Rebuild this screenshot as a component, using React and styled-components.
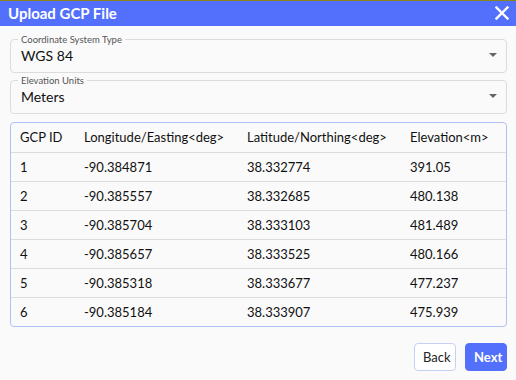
import React from "react";
import styled, { createGlobalStyle } from "styled-components";

const Global = createGlobalStyle`
  html, body { margin: 0; padding: 0; background: #fafafa; }
  body { font-family: Lato, "Open Sans", sans-serif; }
  * { box-sizing: border-box; }
`;

const Dialog = styled.div`
  width: 516px;
  height: 380px;
  background: #fafafa;
  border-top: 1px solid #8a861c;
  display: flex;
  flex-direction: column;
  position: relative;
  overflow: hidden;
`;

const Header = styled.div`
  height: 25px;
  background: #5370fd;
  display: flex;
  align-items: center;
  justify-content: space-between;
  padding: 0 7px 2px 8px;
`;

const Title = styled.h1`
  margin: 0;
  font-size: 15px;
  font-weight: 700;
  color: #fff;
  line-height: 20px;
`;

const Close = styled.button`
  border: 0;
  background: none;
  padding: 0;
  width: 14px;
  height: 14px;
  display: flex;
  align-items: center;
  justify-content: center;
  cursor: pointer;
`;

const Body = styled.div`
  flex: 1;
  display: flex;
  flex-direction: column;
  padding: 13px 9px 0 10px;
  gap: 7px;
`;

const Field = styled.div`
  position: relative;
  height: 34px;
  border: 1px solid #dcdcdc;
  border-radius: 4px;
  display: flex;
  align-items: center;
  justify-content: space-between;
  padding: 0 9px 2px 10px;
`;

const Legend = styled.span`
  position: absolute;
  top: -6px;
  left: 7px;
  padding: 0 3px;
  background: #fafafa;
  font-size: 9.5px;
  color: #555;
  line-height: 11px;
`;

const Value = styled.span`
  font-size: 14px;
  color: #111;
`;

const Caret = styled.span`
  width: 0;
  height: 0;
  border-left: 4px solid transparent;
  border-right: 4px solid transparent;
  border-top: 4px solid #666;
`;

const TableBox = styled.div`
  margin-top: 1px;
  border: 1px solid #b0c0f5;
  border-radius: 4px;
  overflow: hidden;
`;

const Table = styled.table`
  width: 100%;
  border-collapse: collapse;
  font-size: 13px;
  color: #111;
`;

const Th = styled.th`
  text-align: left;
  font-weight: 400;
  height: 29px;
  padding: 0 0 0 ${(p) => p.$pl || 0}px;
  width: ${(p) => p.$w}px;
`;

const Td = styled.td`
  height: 29px;
  padding: 0 0 0 ${(p) => p.$pl || 0}px;
  border-top: 1px solid #dcdcdc;
`;

const Footer = styled.div`
  display: flex;
  justify-content: flex-end;
  gap: 9px;
  padding: 9px 0 0 0;
`;

const Button = styled.button`
  height: 28px;
  padding: 0 8px;
  font-family: Lato, sans-serif;
  font-size: 13px;
  border-radius: 4px;
  cursor: pointer;
  border: 1px solid ${(p) => (p.$primary ? "#5370fd" : "#c5d0f5")};
  background: ${(p) => (p.$primary ? "#5370fd" : "#fff")};
  color: ${(p) => (p.$primary ? "#fff" : "#222")};
  font-weight: ${(p) => (p.$primary ? 700 : 400)};
  width: 42px;
`;

const rows = [
  ["1", "-90.384871", "38.332774", "391.05"],
  ["2", "-90.385557", "38.332685", "480.138"],
  ["3", "-90.385704", "38.333103", "481.489"],
  ["4", "-90.385657", "38.333525", "480.166"],
  ["5", "-90.385318", "38.333677", "477.237"],
  ["6", "-90.385184", "38.333907", "475.939"],
];

export default function App() {
  return (
    <>
      <Global />
      <Dialog>
        <Header>
          <Title>Upload GCP File</Title>
          <Close aria-label="close">
            <svg width="14" height="14" viewBox="0 0 14 14">
              <path d="M1.5 1.5 L12.5 12.5 M12.5 1.5 L1.5 12.5" stroke="#fff" strokeWidth="2.4" strokeLinecap="square" />
            </svg>
          </Close>
        </Header>
        <Body>
          <Field>
            <Legend>Coordinate System Type</Legend>
            <Value>WGS 84</Value>
            <Caret />
          </Field>
          <Field>
            <Legend>Elevation Units</Legend>
            <Value>Meters</Value>
            <Caret />
          </Field>
          <TableBox>
            <Table>
              <thead>
                <tr>
                  <Th $pl={9} $w={73}>GCP ID</Th>
                  <Th $w={163}>Longitude/Easting&lt;deg&gt;</Th>
                  <Th $w={163}>Latitude/Northing&lt;deg&gt;</Th>
                  <Th>Elevation&lt;m&gt;</Th>
                </tr>
              </thead>
              <tbody>
                {rows.map((r) => (
                  <tr key={r[0]}>
                    <Td $pl={9}>{r[0]}</Td>
                    <Td>{r[1]}</Td>
                    <Td>{r[2]}</Td>
                    <Td>{r[3]}</Td>
                  </tr>
                ))}
              </tbody>
            </Table>
          </TableBox>
          <Footer>
            <Button>Back</Button>
            <Button $primary>Next</Button>
          </Footer>
        </Body>
      </Dialog>
    </>
  );
}
